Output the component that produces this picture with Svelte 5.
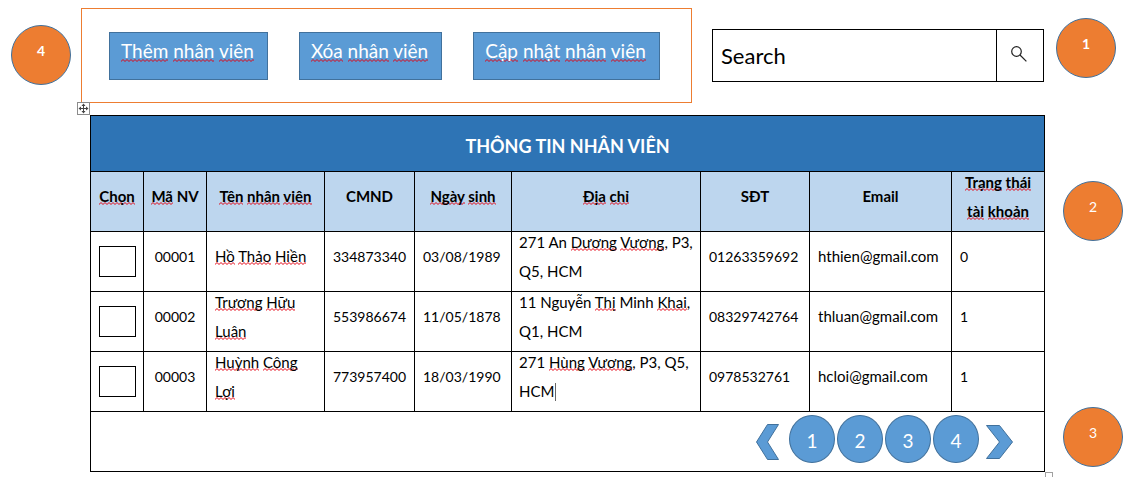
<script>
  const actions = ['{Thêm} {nhân} {viên}', '{Xóa} {nhân} {viên}', '{Cập} {nhật} {nhân} {viên}'];

  const columns = [
    { key: 'pick', label: '{Chọn}' },
    { key: 'code', label: '{Mã} NV' },
    { key: 'name', label: '{Tên} {nhân} {viên}' },
    { key: 'card', label: 'CMND' },
    { key: 'born', label: '{Ngày} {sinh}' },
    { key: 'address', label: '{Địa} {chỉ}' },
    { key: 'phone', label: 'SĐT' },
    { key: 'email', label: 'Email' },
    { key: 'status', label: '{Trạng} {thái} {tài} {khoản}' }
  ];

  const staff = [
    {
      code: '00001', name: '{Hồ} {Thảo} {Hiền}', card: '334873340', born: '03/08/1989',
      address: '271 An {Dương} {Vương}, P3, Q5, HCM', phone: '01263359692',
      email: 'hthien@gmail.com', status: '0'
    },
    {
      code: '00002', name: '{Trương} {Hữu} {Luân}', card: '553986674', born: '11/05/1878',
      address: '11 Nguyễn {Thị} Minh {Khai}, Q1, HCM', phone: '08329742764',
      email: 'thluan@gmail.com', status: '1'
    },
    {
      code: '00003', name: '{Huỳnh} {Công} {Lợi}', card: '773957400', born: '18/03/1990',
      address: '271 {Hùng} {Vương}, P3, Q5, HCM', phone: '0978532761',
      email: 'hcloi@gmail.com', status: '1', editing: true
    }
  ];

  const pages = [1, 2, 3, 4];
  let query = $state('Search');

  // Words in braces carry a spelling mark.
  const parts = (text) => text.split(/(\{[^}]*\}|\s)/).filter((p) => p !== '');
  const plain = (text) => text.replace(/[{}]/g, '');
</script>

{#snippet spelled(text)}{#each parts(text) as part}{#if part.startsWith('{')}<span class="misspelled">{part.slice(1, -1)}</span>{:else}{part}{/if}{/each}{/snippet}

<div class="page">
  <header>
    <span class="marker strong left">4</span>
    <div class="actions">
      {#each actions as action}
        <button type="button" class="action">{@render spelled(action)}</button>
      {/each}
    </div>
    <form class="search" onsubmit={(e) => e.preventDefault()}>
      <input type="text" aria-label="Search" bind:value={query} spellcheck="false" />
      <button type="submit" aria-label="Search">
        <svg width="16" height="16" viewBox="0 0 16 16" fill="none" stroke="#222" stroke-width="1.2">
          <circle cx="5.5" cy="5.5" r="4.8" />
          <path d="M9 9 L15.4 15.4" />
        </svg>
      </button>
    </form>
    <span class="marker strong right">1</span>
  </header>

  <main>
    <div class="sheet">
      <span class="move-handle">
        <svg width="11" height="11" viewBox="0 0 11 11" fill="#444">
          <path d="M5 2h1v3h3v1h-3v3h-1v-3h-3v-1h3z" />
          <path d="M5.5 0.5L7.5 3h-4zM5.5 10.5L7.5 8h-4zM0.5 5.5L3 3.5v4zM10.5 5.5L8 3.5v4z" />
        </svg>
      </span>
      <table>
        <colgroup>
          {#each columns as column}<col class={column.key} />{/each}
        </colgroup>
        <thead>
          <tr class="title"><th colspan="9">THÔNG TIN NHÂN VIÊN</th></tr>
          <tr class="labels">
            {#each columns as column}
              <th scope="col"><div class="text">{@render spelled(column.label)}</div></th>
            {/each}
          </tr>
        </thead>
        <tbody>
          {#each staff as person}
            <tr>
              {#each columns as column}
                <td class={column.key}>
                  {#if column.key === 'pick'}
                    <input type="checkbox" aria-label={plain(person.name)} />
                  {:else}
                    <div class="text">{@render spelled(person[column.key])}{#if person.editing && column.key === 'address'}<span class="caret"></span>{/if}</div>
                  {/if}
                </td>
              {/each}
            </tr>
          {/each}
        </tbody>
        <tfoot>
          <tr>
            <td colspan="9">
              <nav>
                <button type="button" class="arrow" aria-label="Previous">
                  <svg width="23" height="36" viewBox="0 0 23 36"><path d="M11.5 .5H22.5L11.5 18L22.5 35.5H11.5L.5 18Z" /></svg>
                </button>
                <div class="pages">
                  {#each pages as page}<button type="button" class="number">{page}</button>{/each}
                </div>
                <button type="button" class="arrow" aria-label="Next">
                  <svg width="27" height="34" viewBox="0 0 27 34"><path d="M.5 .5H13.5L26.5 17L13.5 33.5H.5L13.5 17Z" /></svg>
                </button>
              </nav>
            </td>
          </tr>
        </tfoot>
      </table>
      <span class="resize-handle"></span>
    </div>
    <aside>
      <span class="marker">2</span>
      <span class="marker">3</span>
    </aside>
  </main>
</div>

<style>
  :global(body) {
    background: #fff;
  }
  .page {
    box-sizing: border-box;
    padding: 8px 0 5px;
    overflow: hidden;
    color: #000;
    font-family: Lato, "Open Sans", sans-serif;
    font-size: 14px;
  }
  .page * {
    box-sizing: border-box;
  }
  button,
  input {
    margin: 0;
    font-family: inherit;
    border-radius: 0;
  }

  .misspelled {
    background: url("data:image/svg+xml,%3Csvg xmlns='http://www.w3.org/2000/svg' width='4' height='3'%3E%3Cpath d='M-1 1.5L0 2.5L2 .5L4 2.5L5 1.5' fill='none' stroke='%23e3000f'/%3E%3C/svg%3E") repeat-x left bottom / 4px 3px;
  }

  header {
    display: flex;
    align-items: flex-start;
    padding: 0 9px 0 11px;
  }
  .marker {
    flex: none;
    width: 60px;
    height: 60px;
    border: 1px solid #41719c;
    border-radius: 50%;
    background: #ed7d31;
    color: #fff;
    line-height: 50px;
    text-align: center;
  }
  .strong {
    font-weight: 700;
  }
  .left {
    margin: 17px 10px 0 0;
  }
  .right {
    margin: 10px 0 0 12px;
  }
  .actions {
    flex: 1 0 611px;
    display: flex;
    align-items: flex-start;
    gap: 31px;
    height: 95px;
    padding: 23px 27px;
    border: 1px solid #ed7d31;
  }
  .action {
    height: 48px;
    padding: 0 13px 12px 11px;
    border: 1px solid #41719c;
    background: #5b9bd5;
    color: #fff;
    font-size: 19px;
    white-space: nowrap;
  }
  .search {
    flex: 1 1 332px;
    display: flex;
    min-width: 0;
    height: 53px;
    margin: 21px 0 0 20px;
    border: 1px solid #000;
  }
  .search input {
    flex: 1;
    min-width: 0;
    padding: 0 8px;
    border: 0;
    outline: 0;
    background: none;
    color: #000;
    font-size: 22px;
  }
  .search button {
    width: 47px;
    padding: 0 3px 0 0;
    border: 0;
    border-left: 1px solid #000;
    background: none;
  }

  main {
    display: flex;
    padding-left: 90px;
    margin-top: 12px;
  }
  .sheet {
    position: relative;
    flex: 1;
    min-width: 0;
  }
  table {
    width: 100%;
    table-layout: fixed;
    border-collapse: collapse;
    line-height: 29px;
  }
  col.pick { width: 53px; }
  col.code { width: 63px; }
  col.name { width: 118px; }
  col.card { width: 90px; }
  col.born { width: 97px; }
  col.address { width: 189px; }
  col.phone { width: 109px; }
  col.email { width: 142px; }
  col.status { width: 93px; }
  th,
  td {
    height: 60px;
    padding: 0 0 0 8px;
    border: 1px solid #000;
    text-align: left;
    white-space: nowrap;
  }
  .text {
    margin: -5px 0 5px;
  }
  .title th {
    height: 56px;
    padding: 6px 0 0;
    background: #2e74b5;
    color: #fff;
    font-size: 18px;
    text-align: center;
  }
  .labels th {
    padding: 0 4px;
    background: #bdd6ee;
    font-size: 15px;
    text-align: center;
    white-space: normal;
  }
  td.name,
  td.address,
  td.email {
    font-size: 15px;
  }
  td.code {
    padding: 0;
    text-align: center;
  }
  td.name {
    padding-right: 8px;
    white-space: normal;
  }
  td.address {
    padding-left: 7px;
    white-space: normal;
  }
  .caret {
    display: inline-block;
    width: 1px;
    height: 18px;
    margin-left: 1px;
    background: #666;
    vertical-align: -4px;
  }
  td input {
    display: block;
    appearance: none;
    width: 37px;
    height: 31px;
    border: 1px solid #000;
    background: #fff;
  }
  td input:checked {
    background: #5b9bd5;
  }

  nav {
    display: flex;
    align-items: center;
    justify-content: flex-end;
    padding: 0 31px 6px 0;
  }
  .pages {
    display: flex;
    gap: 2px;
    margin: 0 7px 0 10px;
  }
  .number {
    width: 46px;
    height: 48px;
    padding: 4px 0 0;
    border: 1px solid #41719c;
    border-radius: 50%;
    background: #5b9bd5;
    color: #fff;
    font-size: 19px;
  }
  .arrow {
    display: flex;
    padding: 6px 0 0;
    border: 0;
    background: none;
  }
  .arrow path {
    fill: #5b9bd5;
    stroke: #41719c;
  }

  .move-handle {
    position: absolute;
    top: -13px;
    left: -13px;
    width: 13px;
    height: 13px;
    border: 1px solid #8c8c8c;
    background: #fff;
  }
  .move-handle svg {
    display: block;
  }
  .resize-handle {
    position: absolute;
    top: 100%;
    left: 100%;
    width: 8px;
    height: 5px;
    border: 1px solid #a0a0a0;
    border-bottom: 0;
  }

  aside {
    display: flex;
    flex-direction: column;
    justify-content: space-between;
    width: 80px;
    padding: 66px 0 5px 18px;
  }
</style>
